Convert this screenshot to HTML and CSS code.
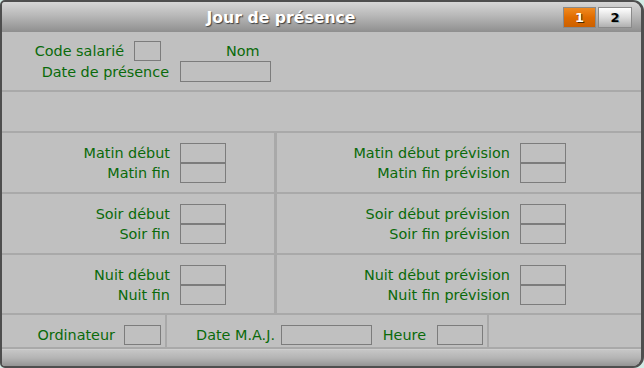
FILE: index.html
```html
<!DOCTYPE html>
<html lang="fr">
<head>
    <meta charset="UTF-8">
    <title>Jour de présence</title>
    <link rel="stylesheet" href="styles.css">
</head>
<body>
    <div class="window">
        <div class="titlebar">
            <div class="title">Jour de présence</div>
            <div class="tabs">
                <div class="tab active">1</div>
                <div class="tab">2</div>
            </div>
        </div>

        <div class="header">
            <div class="line">
                <span class="label code-label">Code salarié</span>
                <span class="field code-field"></span>
                <span class="label nom">Nom</span>
            </div>
            <div class="line">
                <span class="label date-label">Date de présence</span>
                <span class="field date-field"></span>
            </div>
        </div>
        <div class="sep"></div>
        <div class="band"></div>
        <div class="sep"></div>

        <div class="times">
            <div class="cell left">
                <span class="label">Matin début</span><span class="field"></span>
                <span class="label">Matin fin</span><span class="field"></span>
            </div>
            <div class="cell right">
                <span class="label">Matin début prévision</span><span class="field"></span>
                <span class="label">Matin fin prévision</span><span class="field"></span>
            </div>
            <div class="cell left">
                <span class="label">Soir début</span><span class="field"></span>
                <span class="label">Soir fin</span><span class="field"></span>
            </div>
            <div class="cell right">
                <span class="label">Soir début prévision</span><span class="field"></span>
                <span class="label">Soir fin prévision</span><span class="field"></span>
            </div>
            <div class="cell left">
                <span class="label">Nuit début</span><span class="field"></span>
                <span class="label">Nuit fin</span><span class="field"></span>
            </div>
            <div class="cell right">
                <span class="label">Nuit début prévision</span><span class="field"></span>
                <span class="label">Nuit fin prévision</span><span class="field"></span>
            </div>
        </div>
        <div class="sep"></div>

        <div class="footer">
            <div class="fcell first">
                <span class="label ordi-label">Ordinateur</span>
                <span class="field ordi-field"></span>
            </div>
            <div class="fcell second">
                <span class="label maj-label">Date M.A.J.</span>
                <span class="field maj-field"></span>
                <span class="label heure-label">Heure</span>
                <span class="field heure-field"></span>
            </div>
            <div class="fcell"></div>
        </div>
        <div class="statusbar"></div>
    </div>
</body>
</html>
```

FILE: styles.css
```css
body {
    margin: 0;
    background: #d3ebe5;
    font-family: "DejaVu Sans", Verdana, sans-serif;
}

.window {
    width: 644px;
    height: 368px;
    box-sizing: border-box;
    border: 2px solid #4e4e4e;
    border-right-width: 3px;
    border-radius: 5px 11px 11px 5px;
    background: #c0c0c0;
    overflow: hidden;
    display: flex;
    flex-direction: column;
}

.titlebar {
    height: 30px;
    display: flex;
    align-items: center;
    background: linear-gradient(#d6d6d6, #b8b8b8 45%, #8f8f8f);
}

.title {
    flex: 1;
    text-align: center;
    font-weight: bold;
    font-size: 15.7px;
    color: #fff;
    text-shadow: 1px 1px 1px #404040;
    padding-right: 3px;
}

.tabs {
    display: flex;
    gap: 2px;
    margin-right: 9px;
    margin-top: 1px;
}

.tab {
    width: 32px;
    height: 19px;
    border: 1px solid #8a8a8a;
    background: linear-gradient(#ffffff, #d8d8d8 55%, #b0b0b0);
    font-size: 13px;
    font-weight: bold;
    line-height: 19px;
    text-align: center;
    color: #000;
    text-shadow: 1px 1px 0 #9aa;
}

.tab.active {
    width: 31px;
    background: linear-gradient(#f08a20, #e06c00 50%, #cc6000);
    color: #fff;
    text-shadow: 1px 1px 0 #4a2a00;
}

.label {
    font-size: 14.4px;
    color: #0a6a0a;
    white-space: nowrap;
    text-align: right;
}

.field {
    box-sizing: border-box;
    height: 20px;
    border: 1px solid #7c7c7c;
}

.header {
    height: 58px;
    box-sizing: border-box;
    padding-top: 9px;
}

.line {
    display: flex;
    align-items: center;
}

.code-label { width: 122px; margin-right: 10px; }
.code-field { width: 27px; }
.nom { margin-left: 65px; }
.date-label { width: 167px; margin-right: 11px; }
.date-field { width: 91px; height: 21px; }

.sep {
    height: 2px;
    background: #a9a9a9;
}

.band {
    height: 39px;
}

.times {
    display: grid;
    grid-template-columns: 272px 1fr;
    grid-template-rows: 59px 59px 58px;
    gap: 2px 3px;
    background: #a9a9a9;
}

.cell {
    background: #c0c0c0;
    display: grid;
    grid-template-rows: 20px 20px;
    column-gap: 10px;
    align-items: center;
    align-content: start;
    padding-top: 10px;
}

.cell.left { grid-template-columns: 168px 46px; }
.cell.right { grid-template-columns: 233px 46px; }

.cell .field { width: 46px; }

.footer {
    height: 34px;
    display: grid;
    grid-template-columns: 163px 320px 1fr;
    column-gap: 2px;
    background: #a9a9a9;
}

.fcell {
    background: #c0c0c0;
    display: flex;
    align-items: center;
    align-self: start;
    height: 32px;
    box-sizing: border-box;
    padding-top: 10px;
    padding-bottom: 2px;
}

.ordi-label { width: 113px; margin-right: 9px; }
.ordi-field { width: 37px; }
.maj-label { width: 108px; margin-right: 6px; }
.maj-field { width: 91px; }
.heure-label { width: 54px; margin-right: 11px; }
.heure-field { width: 46px; }

.statusbar {
    flex: 1;
    border-top: 1px solid #cdcdcd;
    background: linear-gradient(#c6c6c6, #b4b4b4 50%, #949494);
}
```
